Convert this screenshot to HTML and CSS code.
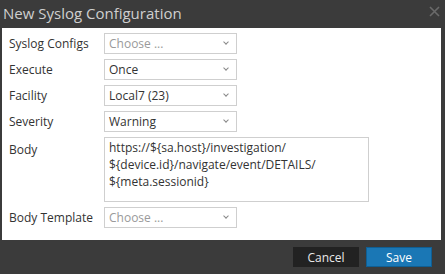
FILE: index.html
```html
<!DOCTYPE html>
<html>
<head>
    <title>New Syslog Configuration</title>
    <link rel="stylesheet" href="styles.css">
</head>
<body>
    <div class="dialog">
        <div class="dialog-header">
            <span class="dialog-title">New Syslog Configuration</span>
            <span class="close-btn">
                <svg width="11" height="11" viewBox="0 0 11 11"><path d="M1 1L10 10M10 1L1 10" stroke="#6a6a6a" stroke-width="1.6"/></svg>
            </span>
        </div>
        <div class="dialog-body">
            <div class="form-row">
                <label>Syslog Configs</label>
                <div class="select placeholder">Choose ...<span class="chevron"></span></div>
            </div>
            <div class="form-row">
                <label>Execute</label>
                <div class="select">Once<span class="chevron"></span></div>
            </div>
            <div class="form-row">
                <label>Facility</label>
                <div class="select">Local7 (23)<span class="chevron"></span></div>
            </div>
            <div class="form-row">
                <label>Severity</label>
                <div class="select">Warning<span class="chevron"></span></div>
            </div>
            <div class="form-row top">
                <label>Body</label>
                <div class="textarea">https://${sa.host}/investigation/<br>${device.id}/navigate/event/DETAILS/<br>${meta.sessionid}</div>
            </div>
            <div class="form-row">
                <label>Body Template</label>
                <div class="select placeholder">Choose ...<span class="chevron"></span></div>
            </div>
        </div>
        <div class="dialog-footer">
            <button class="btn btn-cancel">Cancel</button>
            <button class="btn btn-save">Save</button>
        </div>
    </div>
</body>
</html>
```

FILE: styles.css
```css
body {
    margin: 0;
    padding: 0;
    background: #3b3b3b;
    font-family: "Open Sans", "Liberation Sans", sans-serif;
    font-size: 12px;
    color: #333;
}
.dialog {
    width: 445px;
    height: 274px;
    display: flex;
    flex-direction: column;
}
.dialog-header {
    height: 28px;
    display: flex;
    align-items: center;
    justify-content: space-between;
    padding: 0 5px 0 3px;
}
.dialog-title {
    color: #cfcfcf;
    font-size: 15px;
    margin-top: -3px;
}
.close-btn {
    display: flex;
    margin-top: -6px;
}
.dialog-body {
    margin: 0 4px 0 2px;
    background: #fff;
    padding: 5px 0 12px 7px;
    display: flex;
    flex-direction: column;
    gap: 5px;
}
.form-row {
    display: flex;
    align-items: center;
}
.form-row.top {
    align-items: flex-start;
}
.form-row.top label {
    padding-top: 4px;
}
.form-row label {
    width: 95px;
}
.select {
    position: relative;
    box-sizing: border-box;
    width: 133px;
    height: 21px;
    border: 1px solid #cfcfcf;
    padding: 0 0 0 4px;
    line-height: 19px;
    color: #333;
}
.select.placeholder {
    color: #9a9a9a;
}
.chevron {
    position: absolute;
    right: 8px;
    top: 6px;
    width: 3px;
    height: 3px;
    border-right: 1.5px solid #888;
    border-bottom: 1.5px solid #888;
    transform: rotate(45deg);
}
.textarea {
    box-sizing: border-box;
    width: 265px;
    height: 65px;
    border: 1px solid #cfcfcf;
    padding: 1px 4px;
    line-height: 17px;
}
.dialog-footer {
    display: flex;
    justify-content: flex-end;
    gap: 7px;
    padding: 7px 13px 0 0;
}
.btn {
    width: 66px;
    height: 20px;
    font-family: "Open Sans", "Liberation Sans", sans-serif;
    font-size: 12px;
    color: #e8e8e8;
    border: none;
    padding: 0;
}
.btn-cancel {
    background: #222;
}
.btn-save {
    background: #1a77b5;
    border: 1px solid #0f5f94;
    color: #fff;
}
```
